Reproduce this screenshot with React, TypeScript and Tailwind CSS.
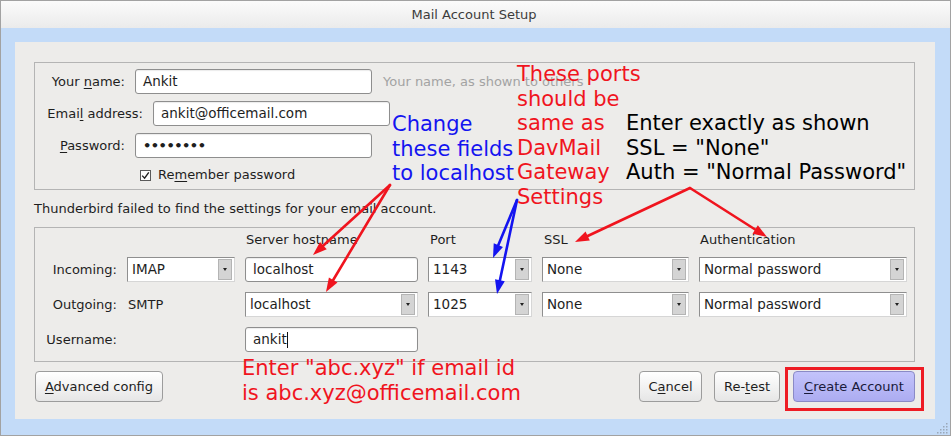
import React from 'react';

const RED = '#f0141e';
const BLUE = '#1414f0';

const U = ({ children }: { children: React.ReactNode }) => <span className="underline underline-offset-2">{children}</span>;

const TextBox = ({ value, className = '' }: { value: React.ReactNode; className?: string }) => (
  <div className={`h-[25px] rounded-[3px] border border-[#8e8e8e] bg-white flex items-center px-[7px] text-[13.5px] shadow-[inset_0_1px_1px_rgba(0,0,0,0.08)] ${className}`}>
    {value}
  </div>
);

const Select = ({ value, className = '' }: { value: string; className?: string }) => (
  <div className={`flex items-center h-[25px] bg-white text-[13.5px] border border-t-[#8f8f8f] border-l-[#8f8f8f] border-b-[#d6d6d6] border-r-[#d6d6d6] ${className}`}>
    <span className="flex-1 pl-[4px] truncate">{value}</span>
    <span className="w-[14px] h-[21px] mr-[2px] bg-[#d4d4d4] border border-[#b4b4b4] flex items-center justify-center">
      <span className="w-0 h-0 border-l-[2px] border-r-[2px] border-t-[3px] border-l-transparent border-r-transparent border-t-[#222]" />
    </span>
  </div>
);

const Button = ({ children, className = '' }: { children: React.ReactNode; className?: string }) => (
  <div className={`h-[31px] rounded-[4px] border flex items-center justify-center ${className}`}>{children}</div>
);

const Arrow = ({ x1, y1, x2, y2, color }: { x1: number; y1: number; x2: number; y2: number; color: string }) => {
  const a = Math.atan2(y2 - y1, x2 - x1);
  const len = 14;
  const w = 5;
  const bx = x2 - Math.cos(a) * len;
  const by = y2 - Math.sin(a) * len;
  const px = -Math.sin(a) * w;
  const py = Math.cos(a) * w;
  return (
    <g>
      <line x1={x1} y1={y1} x2={bx} y2={by} stroke={color} strokeWidth={2.6} strokeLinecap="round" />
      <polygon points={`${x2},${y2} ${bx + px},${by + py} ${bx - px},${by - py}`} fill={color} />
    </g>
  );
};

export default function App() {
  return (
    <div className="relative w-[951px] h-[436px] border border-[#a2a2a2] overflow-hidden text-[13px] text-[#1e1e1e] font-['DejaVu_Sans',sans-serif]">
      <div className="h-[27px] flex items-center justify-center bg-linear-to-b from-[#fbfbfb] to-[#ebebeb] text-[#3c3c3c] pr-[3px]">
        Mail Account Setup
      </div>

      <div className="relative h-[407px] bg-[#c3dbf8] pl-[14px] pr-[15px] pt-[14px] pb-[16px]">
        <div className="h-[377px] bg-[#edecea] pl-[19px] pr-[20px] pt-[20px] flex flex-col">
          {/* account fieldset */}
          <div className="h-[128px] border border-[#b4b4b4] pt-[6px] flex flex-col gap-[7px]">
            <div className="flex items-center h-[25px]">
              <div className="w-[90px] text-right">Your <U>n</U>ame:</div>
              <TextBox value="Ankit" className="ml-[10px] w-[237px]" />
              <div className="ml-[11px] text-[#a3a3a3]">Your name, as shown to others</div>
            </div>
            <div className="flex items-center h-[25px]">
              <div className="w-[108px] text-right">Emai<U>l</U> address:</div>
              <TextBox value="ankit@officemail.com" className="ml-[10px] w-[237px]" />
            </div>
            <div className="flex items-center h-[25px]">
              <div className="w-[90px] text-right"><U>P</U>assword:</div>
              <TextBox value={<span className="text-[13px] font-bold tracking-[-0.5px]">••••••••</span>} className="ml-[10px] w-[237px]" />
            </div>
            <div className="flex items-center h-[20px] pl-[105px]">
              <span className="w-[11px] h-[11px] border border-[#5a5a5a] bg-white flex items-center justify-center">
                <svg width="9" height="9" viewBox="0 0 9 9">
                  <path d="M1.2 4.6 L3.6 7.2 L7.8 1.4" fill="none" stroke="#222" strokeWidth="1.4" />
                </svg>
              </span>
              <span className="ml-[7px]">Re<U>m</U>ember password</span>
            </div>
          </div>

          <div className="h-[37px] flex items-center">Thunderbird failed to find the settings for your email account.</div>

          {/* server fieldset */}
          <div className="h-[135px] border border-[#b4b4b4] pt-[5px] grid grid-cols-[82px_108px_173px_104px_147px_208px] gap-x-[10px] grid-rows-[14px_25px_25px_25px] gap-y-[10px] content-start">
            <div />
            <div />
            <div className="pl-[1px] leading-[14px]">Server hostname</div>
            <div className="pl-[2px] leading-[14px]">Port</div>
            <div className="pl-[2px] leading-[14px]">SSL</div>
            <div className="pl-[1px] leading-[14px]">Authentication</div>

            <div className="text-right self-center">Incoming:</div>
            <Select value="IMAP" />
            <TextBox value="localhost" />
            <Select value="1143" />
            <Select value="None" />
            <Select value="Normal password" />

            <div className="text-right self-center">Outgoing:</div>
            <div className="self-center pl-[1px]">SMTP</div>
            <Select value="localhost" />
            <Select value="1025" />
            <Select value="None" />
            <Select value="Normal password" />

            <div className="text-right self-center">Username:</div>
            <div />
            <TextBox
              value={
                <span className="flex items-center">
                  ankit<span className="w-[1px] h-[16px] bg-[#111]" />
                </span>
              }
              className="border-[#6d98d6]"
            />
          </div>

          <div className="mt-[9px] flex items-center">
            <Button className="w-[128px] border-[#9c9c9c] bg-linear-to-b from-white to-[#e6e6e6] ml-[1px]">
              <span><U>A</U>dvanced config</span>
            </Button>
            <div className="flex-1" />
            <Button className="w-[63px] border-[#9c9c9c] bg-linear-to-b from-white to-[#e6e6e6]">
              <span>C<U>a</U>ncel</span>
            </Button>
            <Button className="w-[66px] ml-[12px] border-[#9c9c9c] bg-linear-to-b from-white to-[#e6e6e6]">
              <span>Re-<U>t</U>est</span>
            </Button>
            <div className="relative ml-[13px]">
              <Button className="w-[122px] border-[#8a8ac6] bg-linear-to-b from-[#c3c3fb] to-[#acacf1] text-[#1a1a3a]">
                <span><U>C</U>reate Account</span>
              </Button>
              <div className="absolute -left-[8px] -right-[9px] -top-[4px] -bottom-[9px] border-[3px] border-[#ee1c24]" />
            </div>
          </div>
        </div>

        <svg className="absolute right-[1px] bottom-[1px]" width="13" height="13" viewBox="0 0 13 13">
          {[
            [11, 3], [11, 6], [8, 6], [11, 9], [8, 9], [5, 9], [11, 12], [8, 12], [5, 12], [2, 12],
          ].map(([x, y], i) => (
            <rect key={i} x={x - 1} y={y - 1} width="1.5" height="1.5" fill="#9aa8b8" />
          ))}
        </svg>
      </div>

      {/* annotations */}
      <div className="absolute left-[391px] top-[111px] text-[21px] leading-[24.6px] font-['DejaVu_Sans',sans-serif]" style={{ color: BLUE }}>
        <div>Change</div>
        <div>these fields</div>
        <div>to localhost</div>
      </div>
      <div className="absolute left-[516px] top-[61px] text-[21px] leading-[24.6px] font-['DejaVu_Sans',sans-serif]" style={{ color: RED }}>
        <div>These ports</div>
        <div>should be</div>
        <div>same as</div>
        <div>DavMail</div>
        <div>Gateway</div>
        <div>Settings</div>
      </div>
      <div className="absolute left-[625px] top-[110px] text-[21px] leading-[24.6px] text-black font-['DejaVu_Sans',sans-serif]">
        <div>Enter exactly as shown</div>
        <div>SSL = "None"</div>
        <div>Auth = "Normal Password"</div>
      </div>
      <div className="absolute left-[241px] top-[355px] text-[21px] leading-[24.6px] font-['DejaVu_Sans',sans-serif]" style={{ color: RED }}>
        <div>Enter "abc.xyz" if email id</div>
        <div>is abc.xyz@officemail.com</div>
      </div>

      <svg className="absolute left-0 top-0 pointer-events-none" width="951" height="436">
        <Arrow x1={389} y1={184} x2={312} y2={254} color={RED} />
        <Arrow x1={389} y1={184} x2={325} y2={291} color={RED} />
        <Arrow x1={689} y1={187} x2={574} y2={241} color={RED} />
        <Arrow x1={689} y1={187} x2={766} y2={236} color={RED} />
        <Arrow x1={516} y1={199} x2={492} y2={257} color={BLUE} />
        <Arrow x1={516} y1={199} x2={496} y2={293} color={BLUE} />
      </svg>
    </div>
  );
}
